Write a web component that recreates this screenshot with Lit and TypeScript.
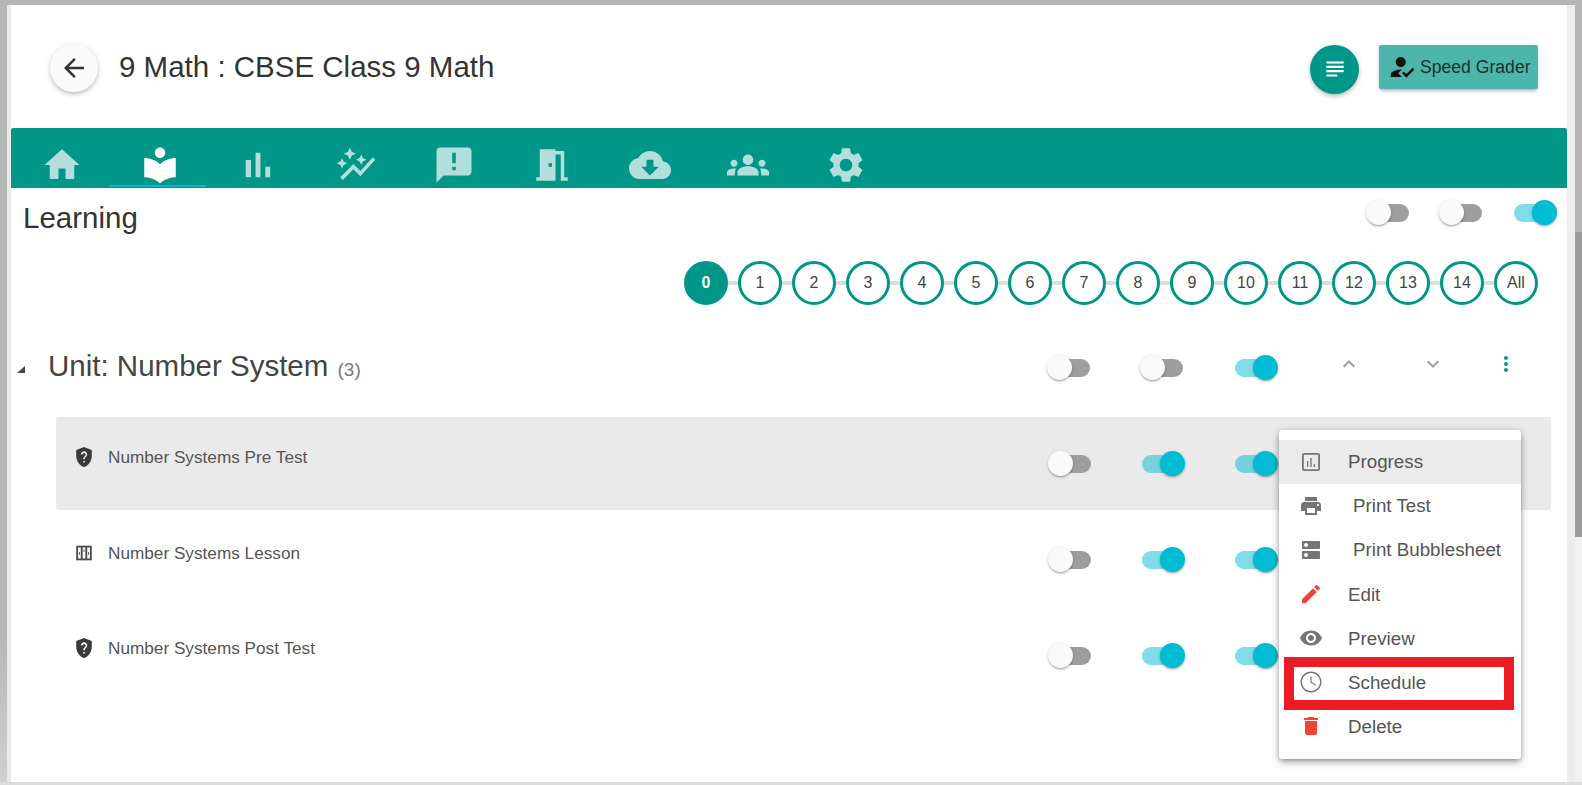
import { LitElement, html, css, svg } from 'lit';
import { customElement, property } from 'lit/decorators.js';

const ICONS: Record<string, string> = {
  home: 'M10 20v-6h4v6h5v-8h3L12 3 2 12h3v8z',
  library: 'M12 11.55C9.64 9.35 6.48 8 3 8v11c3.48 0 6.64 1.35 9 3.55 2.36-2.19 5.52-3.55 9-3.55V8c-3.48 0-6.64 1.35-9 3.55zM12 8c1.66 0 3-1.34 3-3s-1.34-3-3-3-3 1.34-3 3 1.34 3 3 3z',
  bars: 'M5 9.2h3V19H5zM10.6 5h2.8v14h-2.8zm5.6 8H19v6h-2.8z',
  autoGraph: 'M14.06 9.94 12 9l2.06-.94L15 6l.94 2.06L18 9l-2.06.94L15 12zM4 14l.94-2.06L7 11l-2.06-.94L4 8l-.94 2.06L1 11l2.06.94zm4.5-5 1.09-2.41L12 5.5 9.59 4.41 8.5 2 7.41 4.41 5 5.5l2.41 1.09zm-4 11.5 6-6.01 4 4L23 8.93l-1.41-1.41-7.09 7.97-4-4L3 19z',
  announce: 'M20 2H4c-1.1 0-1.99.9-1.99 2L2 22l4-4h14c1.1 0 2-.9 2-2V4c0-1.1-.9-2-2-2zm-7 9h-2V5h2v6zm0 4h-2v-2h2v2z',
  door: 'M14 6v15H3v-2h2V3h9v1h5v15h2v2h-4V6h-3zm-4 5v2h2v-2h-2z',
  cloud: 'M19.35 10.04C18.67 6.59 15.64 4 12 4 9.11 4 6.6 5.64 5.35 8.04 2.34 8.36 0 10.91 0 14c0 3.31 2.69 6 6 6h13c2.76 0 5-2.24 5-5 0-2.64-2.05-4.78-4.65-4.96zM17 13l-5 5-5-5h3V9h4v4h3z',
  groups: 'M12 12.75c1.63 0 3.07.39 4.24.9 1.08.48 1.76 1.56 1.76 2.73V18H6v-1.61c0-1.18.68-2.26 1.76-2.73 1.17-.52 2.61-.91 4.24-.91zM4 13c1.1 0 2-.9 2-2s-.9-2-2-2-2 .9-2 2 .9 2 2 2zm1.13 1.1c-.37-.06-.74-.1-1.13-.1-.99 0-1.93.21-2.78.58C.48 14.9 0 15.62 0 16.43V18h4.5v-1.61c0-.83.23-1.61.63-2.29zM20 13c1.1 0 2-.9 2-2s-.9-2-2-2-2 .9-2 2 .9 2 2 2zm4 3.43c0-.81-.48-1.53-1.22-1.85-.85-.37-1.79-.58-2.78-.58-.39 0-.76.04-1.13.1.4.68.63 1.46.63 2.29V18H24v-1.57zM12 12c1.66 0 3-1.34 3-3s-1.34-3-3-3-3 1.34-3 3 1.34 3 3 3z',
  settings: 'M19.14 12.94c.04-.3.06-.61.06-.94 0-.32-.02-.64-.07-.94l2.03-1.58c.18-.14.23-.41.12-.61l-1.92-3.32c-.12-.22-.37-.29-.59-.22l-2.39.96c-.5-.38-1.03-.7-1.62-.94l-.36-2.54c-.04-.24-.24-.41-.48-.41h-3.84c-.24 0-.43.17-.47.41l-.36 2.54c-.59.24-1.13.57-1.62.94l-2.39-.96c-.22-.08-.47 0-.59.22L2.74 8.87c-.12.21-.08.47.12.61l2.03 1.58c-.05.3-.09.63-.09.94s.02.64.07.94l-2.03 1.58c-.18.14-.23.41-.12.61l1.92 3.32c.12.22.37.29.59.22l2.39-.96c.5.38 1.03.7 1.62.94l.36 2.54c.05.24.24.41.48.41h3.84c.24 0 .44-.17.47-.41l.36-2.54c.59-.24 1.13-.56 1.62-.94l2.39.96c.22.08.47 0 .59-.22l1.92-3.32c.12-.22.07-.47-.12-.61l-2.01-1.58zM12 15.6c-1.98 0-3.6-1.62-3.6-3.6s1.62-3.6 3.6-3.6 3.6 1.62 3.6 3.6-1.62 3.6-3.6 3.6z',
  back: 'M20 11H7.83l5.59-5.59L12 4l-8 8 8 8 1.41-1.41L7.83 13H20v-2z',
  subject: 'M14 17H4v2h10v-2zm6-8H4v2h16V9zM4 15h16v-2H4v2zM4 5v2h16V5H4z',
  grader: 'M9 17l3-2.94c-.39-.04-.68-.06-1-.06-2.67 0-8 1.34-8 4v2h9l-3-3zm2-5c2.21 0 4-1.79 4-4s-1.79-4-4-4-4 1.79-4 4 1.79 4 4 4zm4.47 8.5L12 17l1.4-1.41 2.07 2.07 5.13-5.16 1.4 1.41z',
  progress: 'M19 3H5c-1.1 0-2 .9-2 2v14c0 1.1.9 2 2 2h14c1.1 0 2-.9 2-2V5c0-1.1-.9-2-2-2zm.2 16.2H4.8V4.8h14.4zM8 11h1.3v6H8zm3.4-3h1.3v9h-1.3zm3.3 6H16v3h-1.3z',
  print: 'M19 8H5c-1.66 0-3 1.34-3 3v6h4v4h12v-4h4v-6c0-1.66-1.34-3-3-3zm-3 11H8v-5h8v5zm3-7c-.55 0-1-.45-1-1s.45-1 1-1 1 .45 1 1-.45 1-1 1zm-1-9H6v4h12V3z',
  dns: 'M20 13H4c-.55 0-1 .45-1 1v6c0 .55.45 1 1 1h16c.55 0 1-.45 1-1v-6c0-.55-.45-1-1-1zM7 19c-1.1 0-2-.9-2-2s.9-2 2-2 2 .9 2 2-.9 2-2 2zM20 3H4c-.55 0-1 .45-1 1v6c0 .55.45 1 1 1h16c.55 0 1-.45 1-1V4c0-.55-.45-1-1-1zM7 9c-1.1 0-2-.9-2-2s.9-2 2-2 2 .9 2 2-.9 2-2 2z',
  edit: 'M3 17.25V21h3.75L17.81 9.94l-3.75-3.75L3 17.25zM20.71 7.04c.39-.39.39-1.02 0-1.41l-2.34-2.34c-.39-.39-1.02-.39-1.41 0l-1.83 1.83 3.75 3.75 1.83-1.83z',
  eye: 'M12 4.5C7 4.5 2.73 7.61 1 12c1.73 4.39 6 7.5 11 7.5s9.27-3.11 11-7.5c-1.73-4.39-6-7.5-11-7.5zM12 17c-2.76 0-5-2.24-5-5s2.24-5 5-5 5 2.24 5 5-2.24 5-5 5zm0-8c-1.66 0-3 1.34-3 3s1.34 3 3 3 3-1.34 3-3-1.34-3-3-3z',
  clock: 'M12 1.5C6.2 1.5 1.5 6.2 1.5 12S6.2 22.500 12 22.500 22.500 17.800 22.500 12 17.800 1.500 12 1.500zm0 19.500c-5 0-9-4-9-9s4-9 9-9 9 4 9 9-4 9-9 9zm.6-14.500h-1.200v6l5 3 .6-1-4.400-2.600z',
  trash: 'M6 19c0 1.1.9 2 2 2h8c1.1 0 2-.9 2-2V7H6v12zM19 4h-3.5l-1-1h-5l-1 1H5v2h14V4z',
  up: 'M12 8l-6 6 1.41 1.41L12 10.83l4.59 4.58L18 14z',
  down: 'M16.59 8.59L12 13.17 7.41 8.59 6 10l6 6 6-6z',
  kebab: 'M12 8c1.1 0 2-.9 2-2s-.9-2-2-2-2 .9-2 2 .9 2 2 2zm0 2c-1.1 0-2 .9-2 2s.9 2 2 2 2-.9 2-2-.9-2-2-2zm0 6c-1.1 0-2 .9-2 2s.9 2 2 2 2-.9 2-2-.9-2-2-2z',
};

const icon = (name: string, size = 24) => html`<svg class="icon" width=${size} height=${size} viewBox="0 0 24 24" fill="currentColor"><path d=${ICONS[name]}></path></svg>`;

const shieldIcon = () => html`<svg class="icon" width="22" height="22" viewBox="0 0 24 24">
  <path fill="#3a3a3a" d="M12 1 3.500 4.300v6.500c0 5.400 3.600 10.500 8.500 12.200 4.900-1.700 8.500-6.800 8.500-12.200V4.300z"></path>
  <path class="q" transform="translate(1.600 1.500) scale(.87)" d="M13 19h-2v-2h2v2zm2.070-7.750l-.9.920C13.450 12.900 13 13.500 13 15h-2v-.5c0-1.100.45-2.100 1.170-2.830l1.240-1.260c.37-.36.59-.86.59-1.410 0-1.100-.9-2-2-2s-2 .9-2 2H8c0-2.210 1.790-4 4-4s4 1.790 4 4c0 .88-.36 1.680-.93 2.250z"></path>
</svg>`;

const lessonIcon = () => html`<svg class="icon" width="22" height="22" viewBox="0 0 24 24">
  <path fill="#4a4a4a" d="M3.500 4h17v16h-17z"></path>
  ${[7, 12, 17].map((x, i) => svg`
    <path class="q" d="M${x - 1.500} 6h3v12h-3z"></path>
    <path fill="#4a4a4a" d="M${x - 0.500} ${i === 1 ? 8 : 11}h1v3h-1z"></path>`)}
</svg>`;

@customElement('app-toggle')
export class AppToggle extends LitElement {
  @property({ type: Boolean }) on = false;

  static styles = css`
    :host {
      display: block;
      position: relative;
      width: 43px;
      height: 25px;
    }

    .track {
      position: absolute;
      left: 8px;
      right: 0;
      top: 4px;
      height: 18px;
      border-radius: 9px;
      background: #9e9e9e;
    }

    .knob {
      position: absolute;
      left: 0;
      top: 0;
      width: 25px;
      height: 25px;
      border-radius: 50%;
      background: #fafafa;
      box-shadow: 0 2px 2px -1px rgba(0, 0, 0, 0.2), 0 1px 2px rgba(0, 0, 0, 0.14), 0 1px 4px rgba(0, 0, 0, 0.12);
    }

    .on .track {
      left: 0;
      right: 8px;
      background: rgba(0, 188, 212, 0.5);
    }

    .on .knob {
      left: 18px;
      background: #00bcd4;
    }
  `;

  render() {
    return html`<div class=${this.on ? 'on' : ''}>
      <div class="track"></div>
      <div class="knob"></div>
    </div>`;
  }
}

const TABS = ['home', 'library', 'bars', 'autoGraph', 'announce', 'door', 'cloud', 'groups', 'settings'];
const STEPS = ['0', '1', '2', '3', '4', '5', '6', '7', '8', '9', '10', '11', '12', '13', '14', 'All'];
const ROWS = [
  { title: 'Number Systems Pre Test', kind: 'test', active: true },
  { title: 'Number Systems Lesson', kind: 'lesson', active: false },
  { title: 'Number Systems Post Test', kind: 'test', active: false },
];
const MENU = [
  { label: 'Progress', icon: 'progress', hover: true },
  { label: 'Print Test', icon: 'print', indent: true },
  { label: 'Print Bubblesheet', icon: 'dns', indent: true },
  { label: 'Edit', icon: 'edit', red: true },
  { label: 'Preview', icon: 'eye' },
  { label: 'Schedule', icon: 'clock' },
  { label: 'Delete', icon: 'trash', red: true },
];

@customElement('app-root')
export class AppRoot extends LitElement {
  static styles = css`
    :host {
      display: block;
      width: 1582px;
      height: 785px;
      overflow: hidden;
      font-family: 'Liberation Sans', Arial, sans-serif;
      background: #b4b6b4;
    }

    .frame {
      display: flex;
      height: 777px;
      padding-top: 5px;
    }

    .bottom {
      height: 3px;
      background: #dcdcdc;
    }

    .rail {
      width: 7px;
      background: linear-gradient(#b4b6b4 80%, #cfd1cf);
    }

    .inner-edge {
      width: 4px;
      background: #e9e9e9;
    }

    .edge-right {
      width: 8px;
      background: #ededed;
    }

    .scroll {
      width: 7px;
      display: flex;
      flex-direction: column;
    }

    .scroll-top {
      height: 227px;
      background: #b4b6b4;
    }

    .scroll-thumb {
      height: 305px;
      background: #9c9c9c;
    }

    .scroll-rest {
      flex: 1;
      background: #f1f1f1;
    }

    .page {
      flex: 1;
      background: #fff;
      position: relative;
      min-width: 0;
      color: #333;
    }

    .icon {
      display: block;
      flex: none;
    }

    .header {
      display: flex;
      align-items: center;
      height: 123px;
      padding: 0 29px 0 39px;
      box-sizing: border-box;
    }

    .back {
      width: 48px;
      height: 48px;
      border-radius: 50%;
      background: #fafafa;
      color: #333;
      display: flex;
      align-items: center;
      justify-content: center;
      box-shadow: 0 3px 5px -1px rgba(0, 0, 0, 0.2), 0 1px 6px rgba(0, 0, 0, 0.12);
      margin-top: 2px;
    }

    .title {
      margin: 0 0 0 21px;
      font-size: 29.500px;
      font-weight: 400;
      color: #333;
      flex: 1;
    }

    .fab {
      width: 49px;
      height: 49px;
      border-radius: 50%;
      background: #009688;
      color: #fff;
      display: flex;
      align-items: center;
      justify-content: center;
      box-shadow: 0 3px 5px -1px rgba(0, 0, 0, 0.2), 0 1px 6px rgba(0, 0, 0, 0.12);
      margin-right: 20px;
      margin-top: 5px;
    }

    .grader {
      width: 159px;
      height: 44px;
      margin-top: 1px;
      box-sizing: border-box;
      border-radius: 2px;
      background: #4db6ac;
      color: #17322f;
      display: flex;
      align-items: center;
      padding-left: 8px;
      gap: 3px;
      font-size: 17.600px;
      white-space: nowrap;
      box-shadow: 0 3px 3px -2px rgba(0, 0, 0, 0.25), 0 2px 4px rgba(0, 0, 0, 0.14);
    }

    .grader .icon {
      color: #111;
    }

    .nav {
      display: flex;
      height: 60px;
      padding-left: 2px;
      background: #009688;
      color: #b2dfdb;
      border-radius: 2px 2px 0 0;
    }

    .tab {
      width: 98px;
      height: 58px;
      display: flex;
      align-items: center;
      justify-content: center;
      padding-top: 16px;
      box-sizing: border-box;
      position: relative;
    }

    .tab.active {
      color: #fff;
    }

    .tab.active::after {
      content: '';
      position: absolute;
      left: -2px;
      width: 97px;
      bottom: -1px;
      height: 2px;
      background: #00bcd4;
    }

    .learning {
      display: flex;
      align-items: center;
      height: 48px;
      padding: 0 10px 0 12px;
    }

    .learning h2 {
      flex: 1;
      margin: 11px 0 0;
      font-size: 29.500px;
      font-weight: 400;
      color: #333;
    }

    .learning .second {
      margin-left: 30px;
    }

    .learning .third {
      margin-left: 32px;
    }

    .stepper {
      display: flex;
      justify-content: flex-end;
      margin-top: 25px;
      padding-right: 29px;
    }

    .step {
      width: 44px;
      height: 44px;
      box-sizing: border-box;
      border: 3px solid #009688;
      border-radius: 50%;
      background: #fff;
      display: flex;
      align-items: center;
      justify-content: center;
      font-size: 16px;
      color: #444;
      position: relative;
    }

    .step.current {
      background: #009688;
      color: #fff;
      font-weight: 700;
    }

    .step + .step {
      margin-left: 10px;
    }

    .step + .step::before {
      content: '';
      position: absolute;
      left: -13px;
      width: 10px;
      height: 4px;
      background: #ddd;
    }

    .unit {
      display: flex;
      align-items: center;
      height: 98px;
      margin-top: 14px;
      padding-right: 49px;
    }

    .caret {
      width: 0;
      height: 0;
      margin: 2px 23px 0 6px;
      border-style: solid;
      border-width: 0 0 7px 8px;
      border-color: transparent transparent #444 transparent;
    }

    .unit h3 {
      flex: 1;
      margin: -4px 0 0;
      font-size: 29.500px;
      font-weight: 400;
      color: #444;
    }

    .count {
      font-size: 19px;
      color: #777;
      margin-left: 1px;
    }

    .controls {
      display: flex;
      align-items: center;
      flex: none;
    }

    .unit .controls {
      margin-top: -2px;
    }

    .chevron {
      color: #9e9e9e;
      margin-top: -6px;
    }

    .gap-first {
      margin-left: 51px;
    }

    .gap-toggle {
      margin-left: 50px;
    }

    .unit .gap-first {
      margin-left: 50px;
    }

    .unit .gap-toggle {
      margin-left: 52px;
    }

    .gap-chevron {
      margin-left: 59px;
    }

    .gap-chevron + .gap-chevron {
      margin-left: 60px;
    }

    .kebab {
      margin-left: 49px;
      margin-top: -6px;
      color: #009688;
    }

    .rows {
      margin-left: 45px;
      width: 1495px;
      display: flex;
      flex-direction: column;
      gap: 3px;
    }

    .row {
      display: flex;
      height: 93px;
      padding: 0 273px 0 17px;
      border-radius: 3px;
    }

    .row.active {
      background: #eaeaea;
    }

    .row .q {
      fill: #fff;
    }

    .row.active .q {
      fill: #eaeaea;
    }

    .row-main {
      flex: 1;
      display: flex;
      align-items: center;
      gap: 13px;
      height: 22px;
      margin-top: 29px;
      font-size: 17.200px;
      color: #555;
    }

    .row:last-child .row-main {
      margin-top: 28px;
    }

    .row .controls {
      height: 93px;
    }

    .menu {
      position: absolute;
      left: 1268px;
      top: 425px;
      width: 242px;
      padding: 10px 0 11px;
      box-sizing: border-box;
      background: #fff;
      border-radius: 3px;
      box-shadow: 0 2px 4px -1px rgba(0, 0, 0, 0.3), 0 4px 8px rgba(0, 0, 0, 0.18), 0 1px 8px rgba(0, 0, 0, 0.14);
    }

    .menu-item {
      display: flex;
      align-items: center;
      height: 44px;
      padding-left: 20px;
      font-size: 18.750px;
      color: #555;
    }

    .menu-item:nth-child(n + 4) span {
      margin-top: 2px;
    }

    .menu-item.hover {
      background: #ebebeb;
    }

    .menu-item .icon {
      color: #757575;
      margin-right: 25px;
    }

    .menu-item.red .icon {
      color: #f44336;
    }

    .menu-item.indent span {
      margin-left: 5px;
    }

    .callout {
      position: absolute;
      left: 5px;
      top: 227px;
      width: 230px;
      height: 53px;
      box-sizing: border-box;
      border: 10px solid #ed1c24;
    }
  `;

  private renderToggles(values: boolean[]) {
    return html`
      <app-toggle ?on=${values[0]}></app-toggle>
      <app-toggle class="gap-first" ?on=${values[1]}></app-toggle>
      <app-toggle class="gap-toggle" ?on=${values[2]}></app-toggle>`;
  }

  render() {
    return html`
      <div class="frame">
        <div class="rail"></div>
        <div class="inner-edge"></div>
        <div class="page">
          <div class="header">
            <div class="back">${icon('back', 30)}</div>
            <h1 class="title">9 Math : CBSE Class 9 Math</h1>
            <div class="fab">${icon('subject', 26)}</div>
            <div class="grader">${icon('grader', 30)}<span>Speed Grader</span></div>
          </div>

          <nav class="nav">
            ${TABS.map((t, i) => html`<div class="tab ${i === 1 ? 'active' : ''}">${icon(t, 42)}</div>`)}
          </nav>

          <div class="learning">
            <h2>Learning</h2>
            <app-toggle></app-toggle>
            <app-toggle class="second"></app-toggle>
            <app-toggle class="third" on></app-toggle>
          </div>

          <div class="stepper">
            ${STEPS.map((s, i) => html`<div class="step ${i === 0 ? 'current' : ''}">${s}</div>`)}
          </div>

          <div class="unit">
            <div class="caret"></div>
            <h3>Unit: Number System <span class="count">(3)</span></h3>
            <div class="controls">
              ${this.renderToggles([false, false, true])}
              <div class="chevron gap-chevron">${icon('up')}</div>
              <div class="chevron gap-chevron">${icon('down')}</div>
              <div class="kebab">${icon('kebab')}</div>
            </div>
          </div>

          <div class="rows">
            ${ROWS.map((r) => html`
              <div class="row ${r.active ? 'active' : ''}">
                <div class="row-main">
                  ${r.kind === 'test' ? shieldIcon() : lessonIcon()}
                  <span>${r.title}</span>
                </div>
                <div class="controls">${this.renderToggles([false, true, true])}</div>
              </div>`)}
          </div>

          <div class="menu">
            ${MENU.map((m) => html`
              <div class="menu-item ${m.hover ? 'hover' : ''} ${m.red ? 'red' : ''} ${m.indent ? 'indent' : ''}">
                ${icon(m.icon)}<span>${m.label}</span>
              </div>`)}
            <div class="callout"></div>
          </div>
        </div>
        <div class="edge-right"></div>
        <div class="scroll">
          <div class="scroll-top"></div>
          <div class="scroll-thumb"></div>
          <div class="scroll-rest"></div>
        </div>
      </div>
      <div class="bottom"></div>
    `;
  }
}
